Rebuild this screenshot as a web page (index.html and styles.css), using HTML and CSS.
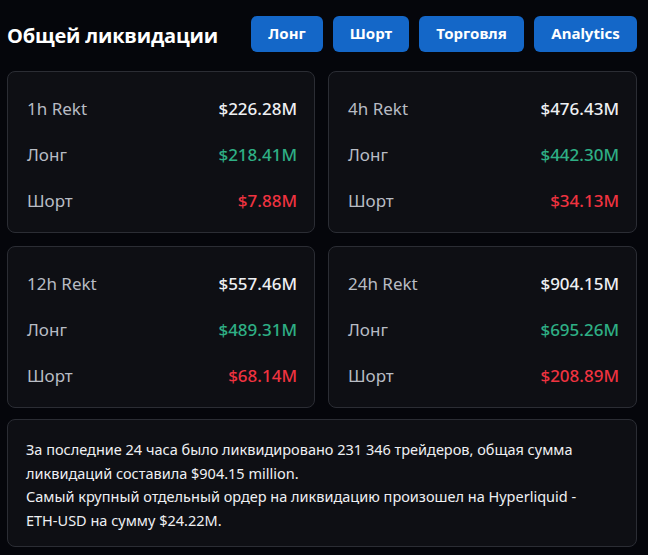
FILE: index.html
```html
<!DOCTYPE html>
<html lang="ru">
<head>
<meta charset="utf-8">
<link rel="stylesheet" href="styles.css">
</head>
<body>
<div class="page">
  <header class="header">
    <h1 class="title">Общей ликвидации</h1>
    <nav class="buttons">
      <button class="btn btn-long">Лонг</button>
      <button class="btn btn-short">Шорт</button>
      <button class="btn btn-trade">Торговля</button>
      <button class="btn btn-analytics">Analytics</button>
    </nav>
  </header>
  <section class="grid">
    <div class="card">
      <div class="row"><span class="label">1h Rekt</span><span class="value">$226.28M</span></div>
      <div class="row"><span class="label">Лонг</span><span class="value green">$218.41M</span></div>
      <div class="row"><span class="label">Шорт</span><span class="value red">$7.88M</span></div>
    </div>
    <div class="card">
      <div class="row"><span class="label">4h Rekt</span><span class="value">$476.43M</span></div>
      <div class="row"><span class="label">Лонг</span><span class="value green">$442.30M</span></div>
      <div class="row"><span class="label">Шорт</span><span class="value red">$34.13M</span></div>
    </div>
    <div class="card">
      <div class="row"><span class="label">12h Rekt</span><span class="value">$557.46M</span></div>
      <div class="row"><span class="label">Лонг</span><span class="value green">$489.31M</span></div>
      <div class="row"><span class="label">Шорт</span><span class="value red">$68.14M</span></div>
    </div>
    <div class="card">
      <div class="row"><span class="label">24h Rekt</span><span class="value">$904.15M</span></div>
      <div class="row"><span class="label">Лонг</span><span class="value green">$695.26M</span></div>
      <div class="row"><span class="label">Шорт</span><span class="value red">$208.89M</span></div>
    </div>
  </section>
  <section class="summary">
    <p>За последние 24 часа было ликвидировано 231 346 трейдеров, общая сумма ликвидаций составила $904.15 million.<br>Самый крупный отдельный ордер на ликвидацию произошел на Hyperliquid - ETH-USD на сумму $24.22M.</p>
  </section>
</div>
</body>
</html>
```
FILE: styles.css
```css
html, body {
  margin: 0;
  padding: 0;
  background: #05060b;
}
body {
  font-family: "Noto Sans", "Open Sans", sans-serif;
  color: #e8eaee;
}
.page {
  width: 630px;
  padding: 16px 11px 9px 7px;
}
.header {
  display: flex;
  align-items: center;
  justify-content: space-between;
  height: 36px;
}
.title {
  margin: 0;
  padding-top: 2px;
  font-family: "Open Sans", "Noto Sans", sans-serif;
  font-size: 20px;
  font-weight: 700;
  color: #ffffff;
  letter-spacing: -0.2px;
}
.buttons {
  display: flex;
  gap: 10px;
}
.btn {
  height: 36px;
  border: none;
  border-radius: 6px;
  background: #1467c8;
  color: #ffffff;
  font-family: "Noto Sans", sans-serif;
  font-weight: 700;
  font-size: 15px;
  padding: 0 0 2px 0;
}
.btn-long { width: 72px; }
.btn-short { width: 76px; }
.btn-trade { width: 105px; }
.btn-analytics { width: 103px; }
.grid {
  margin-top: 19px;
  display: grid;
  grid-template-columns: 308px 309px;
  column-gap: 13px;
  row-gap: 13px;
}
.card {
  background: #0e0f14;
  border: 1px solid #2b2d34;
  border-radius: 8px;
  height: 162px;
  box-sizing: border-box;
  padding: 13px 17px 8px 19px;
  display: flex;
  flex-direction: column;
}
.row {
  height: 47px;
  display: flex;
  align-items: center;
  justify-content: space-between;
  font-size: 17px;
}
.label {
  color: #b8bcc4;
}
.value {
  color: #eef0f3;
  font-weight: 500;
}
.green { color: #2eaf85; }
.red { color: #ef3340; }
.summary {
  margin-top: 11px;
  background: #0e0f14;
  border: 1px solid #2b2d34;
  border-radius: 8px;
  height: 128px;
  box-sizing: border-box;
  padding: 18px 18px 0 18px;
}
.summary p {
  margin: 0;
  max-width: 556px;
  font-size: 14.5px;
  line-height: 23.5px;
  color: #eef0f3;
}
```
